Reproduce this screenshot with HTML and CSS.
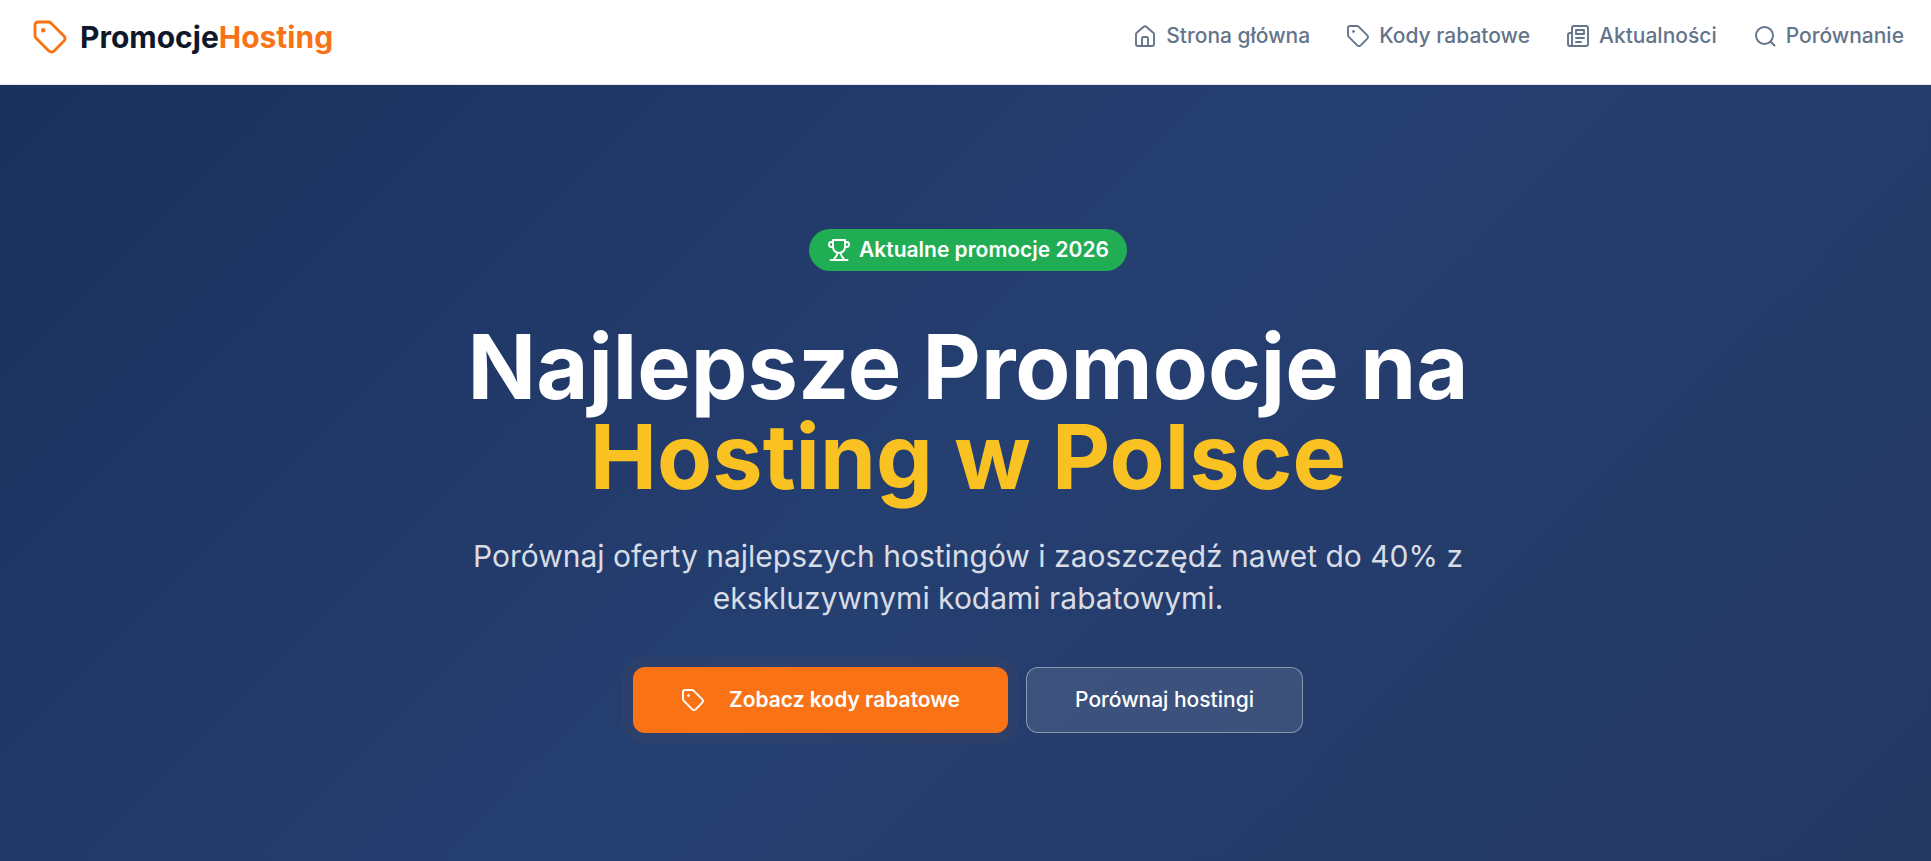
FILE: index.html
```html
<!DOCTYPE html>
<html lang="pl">
<head>
  <meta charset="UTF-8" />
  <meta name="viewport" content="width=device-width, initial-scale=1.0" />
  <title>PromocjeHosting</title>
  <link rel="stylesheet" href="styles.css">
</head>
<body>
  <svg class="sprite" aria-hidden="true">
    <symbol id="tag" viewBox="0 0 24 24">
      <path d="M2 4a2 2 0 0 1 2-2h7.2a2 2 0 0 1 1.4.6l8.7 8.7a2.4 2.4 0 0 1 0 3.4l-6.6 6.6a2.4 2.4 0 0 1-3.4 0l-8.7-8.7A2 2 0 0 1 2 11.200z" />
      <circle class="dot" cx="7.500" cy="7.500" r="1" />
    </symbol>
  </svg>

  <header class="header">
    <a class="logo" href="#">
      <svg class="logo-icon"><use href="#tag" /></svg>
      <span>Promocje<span class="logo-accent">Hosting</span></span>
    </a>
    <nav class="nav">
      <a href="#">
        <svg class="icon" viewBox="0 0 24 24">
          <path d="M3 10.200a2 2 0 0 1 .7-1.500l7-6a2 2 0 0 1 2.600 0l7 6a2 2 0 0 1 .7 1.500V20a2 2 0 0 1-2 2H5a2 2 0 0 1-2-2z" />
          <path d="M9 21.500v-7a1.500 1.500 0 0 1 1.500-1.500h3a1.500 1.500 0 0 1 1.500 1.500v7" />
        </svg>
        Strona główna
      </a>
      <a href="#">
        <svg class="icon"><use href="#tag" /></svg>
        Kody rabatowe
      </a>
      <a href="#">
        <svg class="icon" viewBox="0 0 24 24">
          <path d="M4 22h16a2 2 0 0 0 2-2V4a2 2 0 0 0-2-2H8a2 2 0 0 0-2 2v16a2 2 0 0 1-4 0v-9a2 2 0 0 1 2-2h2" />
          <path d="M10 6h8v4h-8zM10 14h8M10 18h5" />
        </svg>
        Aktualności
      </a>
      <a href="#">
        <svg class="icon" viewBox="0 0 24 24">
          <circle cx="11.500" cy="11.500" r="8.500" />
          <path d="M21.500 21.500l-4-4" />
        </svg>
        Porównanie
      </a>
    </nav>
  </header>

  <main class="hero">
    <div class="badge">
      <svg class="icon" viewBox="0 0 24 24">
        <path d="M6 2h12v7a6 6 0 0 1-12 0z" />
        <path d="M6 4H4.500a2.500 2.500 0 0 0 0 5H6M18 4h1.500a2.500 2.500 0 0 1 0 5H18" />
        <path d="M10 14.700V17c0 1-2.500 2-3 5M14 14.700V17c0 1 2.500 2 3 5M3.500 22h17" />
      </svg>
      Aktualne promocje 2026
    </div>
    <h1>Najlepsze Promocje na <span class="highlight">Hosting w Polsce</span></h1>
    <p class="lead">Porównaj oferty najlepszych hostingów i zaoszczędź nawet do 40% z ekskluzywnymi kodami rabatowymi.</p>
    <div class="actions">
      <a class="btn btn-primary" href="#">
        <svg class="icon"><use href="#tag" /></svg>
        Zobacz kody rabatowe
      </a>
      <a class="btn btn-secondary" href="#">Porównaj hostingi</a>
    </div>
  </main>
</body>
</html>
```
FILE: styles.css
```css
:root {
  --orange: #f97316;
  --yellow: #f9c222;
  --green: #21ad54;
  --muted: #64748b;
}

* {
  box-sizing: border-box;
  margin: 0;
  padding: 0;
}

body {
  display: flex;
  flex-direction: column;
  min-height: 100vh;
  font-family: Inter, sans-serif;
  font-size: 21px;
}

a {
  color: inherit;
  text-decoration: none;
}

svg {
  flex: none;
  fill: none;
  stroke: currentColor;
  stroke-width: 1.9;
  stroke-linecap: round;
  stroke-linejoin: round;
}

.sprite {
  position: absolute;
  width: 0;
  height: 0;
}

.dot {
  fill: currentColor;
  stroke-width: 1;
}

.icon {
  width: 24px;
  height: 24px;
}

.header {
  display: flex;
  justify-content: space-between;
  align-items: flex-start;
  padding: 12px 27px 22px 32px;
  border-bottom: 1px solid #e2e8f0;
  background: #fff;
}

.logo {
  display: flex;
  align-items: center;
  gap: 12px;
  font-size: 30px;
  font-weight: 700;
  line-height: 50px;
  color: #0f172a;
}

.logo-icon {
  width: 36px;
  height: 36px;
  color: var(--orange);
}

.logo-accent {
  color: var(--orange);
}

.nav {
  display: flex;
  gap: 36px;
  font-weight: 500;
  line-height: 48px;
  color: var(--muted);
}

.nav a {
  display: flex;
  align-items: center;
  gap: 9px;
}

.hero {
  flex: 1;
  display: flex;
  flex-direction: column;
  align-items: center;
  padding: 144px 24px 96px 29px;
  background: linear-gradient(135deg, #1b315d 0%, #253f71 50%, #243862 100%);
  color: #fff;
  text-align: center;
}

.badge {
  display: flex;
  align-items: center;
  gap: 8px;
  padding: 0 18px;
  border-radius: 24px;
  background: var(--green);
  font-weight: 600;
  line-height: 42px;
}

h1 {
  margin-top: 51px;
  font-size: 90px;
  font-weight: 700;
  line-height: 90px;
}

.highlight {
  display: block;
  color: var(--yellow);
}

.lead {
  max-width: 1008px;
  margin-top: 33px;
  font-size: 30px;
  line-height: 42px;
  color: #d7dce5;
}

.actions {
  display: flex;
  flex-wrap: wrap;
  justify-content: center;
  gap: 18px;
  margin-top: 48px;
}

.btn {
  display: flex;
  align-items: center;
  gap: 24px;
  padding: 0 48px;
  border-radius: 12px;
  font-weight: 600;
  line-height: 66px;
}

.btn-primary {
  background: var(--orange);
  box-shadow: 0 0 0 11px rgba(249, 115, 22, 0.04);
}

.btn-secondary {
  border: 1px solid rgba(255, 255, 255, 0.4);
  background: rgba(255, 255, 255, 0.11);
  font-weight: 500;
  line-height: 64px;
}
```
